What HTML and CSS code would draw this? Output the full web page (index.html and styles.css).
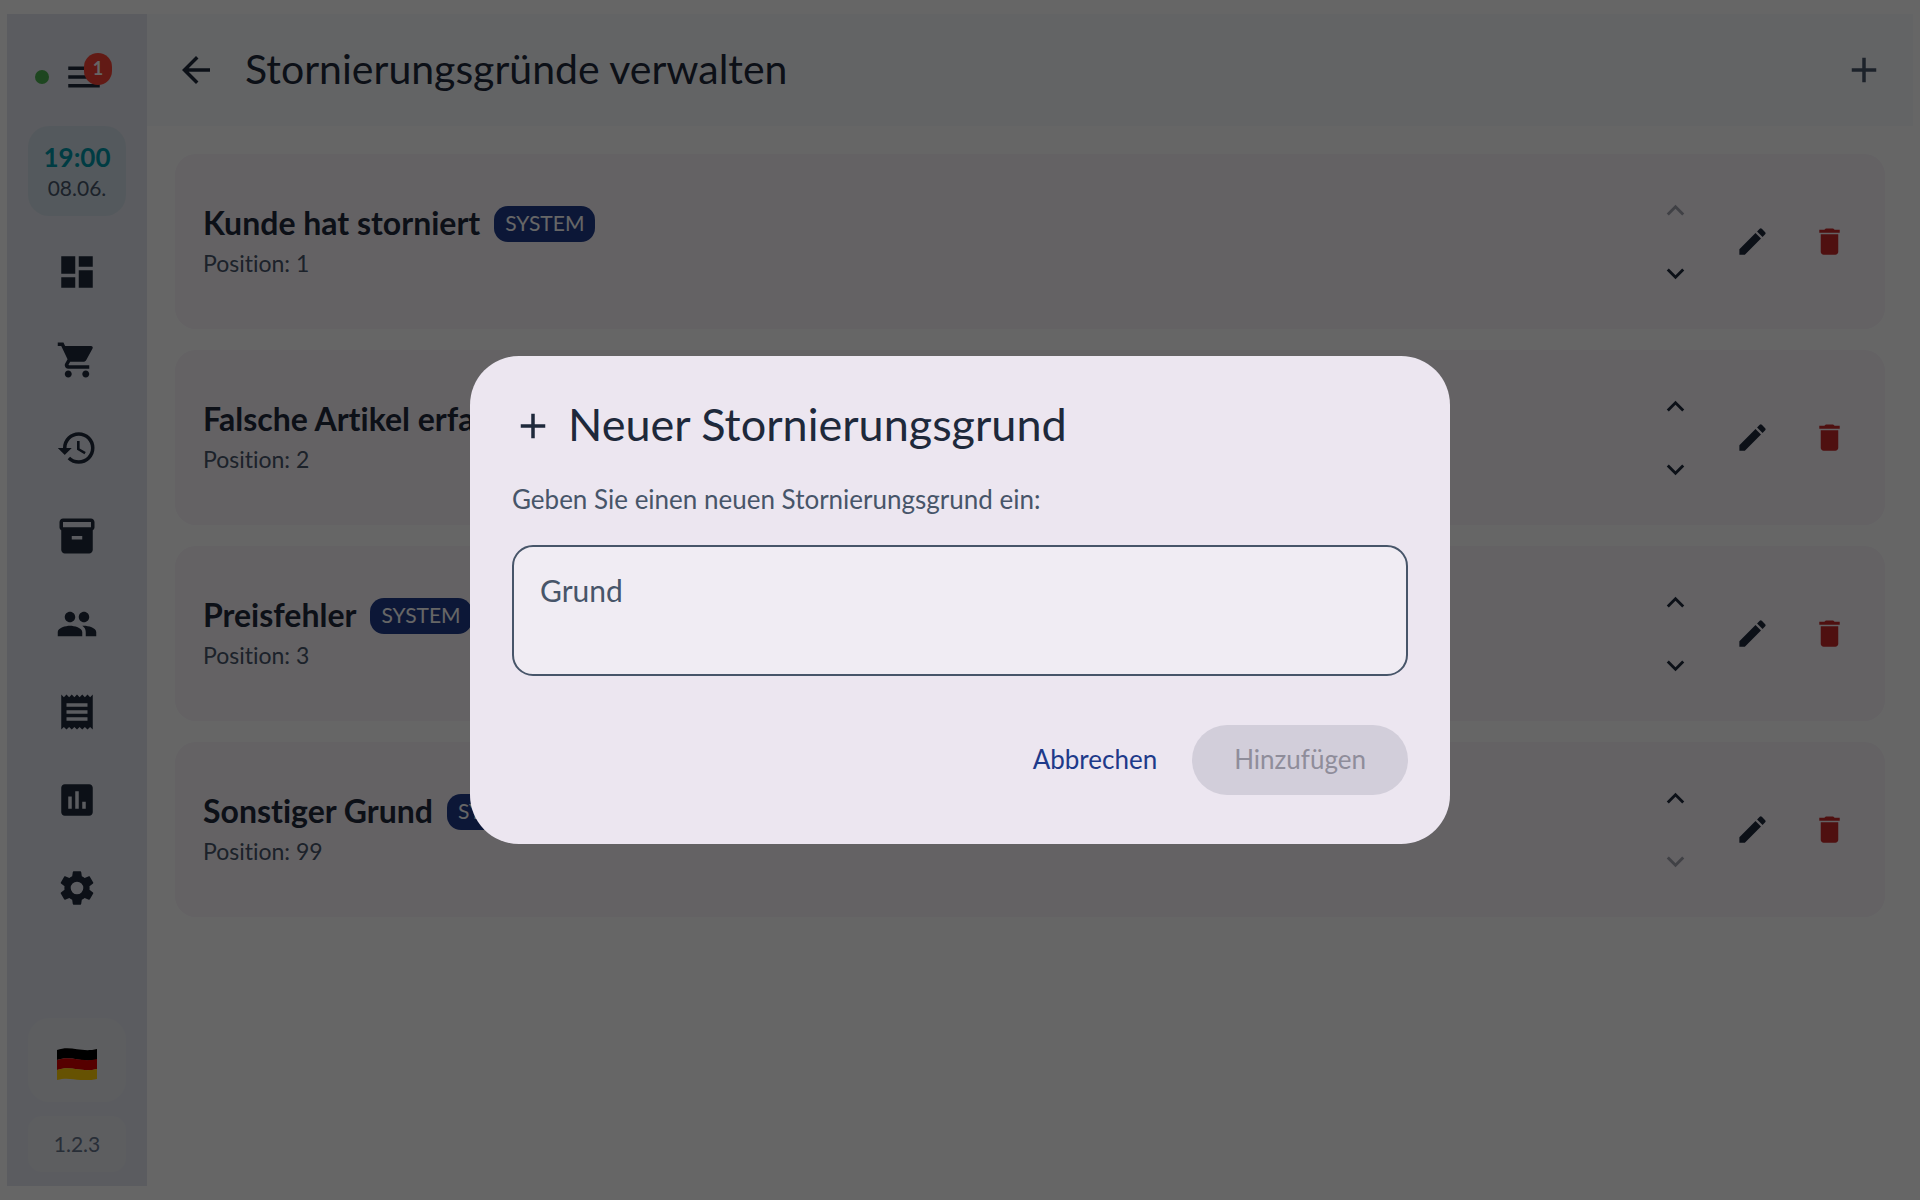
FILE: index.html
```html
<!DOCTYPE html>
<html lang="de">
<head>
    <meta charset="UTF-8">
    <meta name="viewport" content="width=device-width, initial-scale=1.0">
    <title>Stornierungsgründe verwalten</title>
    <link rel="stylesheet" href="styles.css">
</head>
<body>
    <!-- Shared icons -->
    <svg class="sprite" aria-hidden="true">
        <symbol id="up" viewBox="0 0 24 24"><path d="M7.41 15.41L12 10.83l4.59 4.58L18 14l-6-6-6 6z"/></symbol>
        <symbol id="down" viewBox="0 0 24 24"><path d="M7.41 8.59L12 13.17l4.59-4.58L18 10l-6 6-6-6z"/></symbol>
        <symbol id="edit" viewBox="0 0 24 24"><path d="M3 17.25V21h3.75L17.81 9.94l-3.75-3.75L3 17.25zM20.71 7.04a1 1 0 0 0 0-1.41l-2.34-2.34a1 1 0 0 0-1.41 0l-1.83 1.83 3.75 3.75 1.83-1.83z"/></symbol>
        <symbol id="delete" viewBox="0 0 24 24"><path d="M6 19c0 1.1.9 2 2 2h8c1.1 0 2-.9 2-2V7H6v12zM19 4h-3.5l-1-1h-5l-1 1H5v2h14V4z"/></symbol>
        <symbol id="add" viewBox="0 0 24 24"><path d="M19 13h-6v6h-2v-6H5v-2h6V5h2v6h6v2z"/></symbol>
    </svg>

    <div class="app">
        <aside class="sidebar">
            <div class="menu-row">
                <span class="online-dot"></span>
                <button class="menu-btn" aria-label="Menü">
                    <svg class="icon" viewBox="0 0 24 24"><path d="M3 18h18v-2H3v2zm0-5h18v-2H3v2zm0-7v2h18V6H3z"/></svg>
                    <span class="count">1</span>
                </button>
            </div>
            <div class="clock">
                <span class="time">19:00</span>
                <span class="date">08.06.</span>
            </div>
            <nav>
                <a href="#" aria-label="Übersicht"><svg class="icon" viewBox="0 0 24 24"><path d="M3 13h8V3H3v10zm0 8h8v-6H3v6zm10 0h8V11h-8v10zm0-18v6h8V3h-8z"/></svg></a>
                <a href="#" aria-label="Verkauf"><svg class="icon" viewBox="0 0 24 24"><path d="M7 18c-1.1 0-1.99.9-1.99 2S5.9 22 7 22s2-.9 2-2-.9-2-2-2zM1 2v2h2l3.6 7.59-1.35 2.45c-.16.28-.25.61-.25.96 0 1.1.9 2 2 2h12v-2H7.42c-.14 0-.25-.11-.25-.25l.03-.12.9-1.63h7.45c.75 0 1.41-.41 1.75-1.03l3.58-6.49A1 1 0 0 0 20 4H5.21l-.94-2H1zm16 16c-1.1 0-1.99.9-1.99 2s.89 2 1.99 2 2-.9 2-2-.9-2-2-2z"/></svg></a>
                <a href="#" aria-label="Verlauf"><svg class="icon" viewBox="0 0 24 24"><path d="M13 3a9 9 0 0 0-9 9H1l3.89 3.89.07.14L9 12H6c0-3.87 3.13-7 7-7s7 3.13 7 7-3.13 7-7 7c-1.93 0-3.68-.79-4.94-2.06l-1.42 1.42A8.95 8.95 0 0 0 13 21a9 9 0 0 0 0-18zm-1 5v5l4.28 2.54.72-1.21-3.5-2.08V8H12z"/></svg></a>
                <a href="#" aria-label="Artikel"><svg class="icon" viewBox="0 0 24 24"><path fill-rule="evenodd" d="M20 2H4c-1 0-2 .9-2 2v3.01c0 .72.43 1.34 1 1.69V20c0 1.1 1.1 2 2 2h14c.9 0 2-.9 2-2V8.7c.57-.35 1-.97 1-1.69V4c0-1.1-1-2-2-2zm-5 12H9v-2h6v2zm5-7H4V4h16v3z"/></svg></a>
                <a href="#" aria-label="Kunden"><svg class="icon" viewBox="0 0 24 24"><path d="M16 11c1.66 0 2.99-1.34 2.99-3S17.66 5 16 5s-3 1.34-3 3 1.34 3 3 3zm-8 0c1.66 0 2.99-1.34 2.99-3S9.66 5 8 5 5 6.34 5 8s1.34 3 3 3zm0 2c-2.33 0-7 1.17-7 3.5V19h14v-2.5c0-2.33-4.67-3.5-7-3.5zm8 0c-.29 0-.62.02-.97.05 1.16.84 1.97 1.97 1.97 3.45V19h6v-2.5c0-2.33-4.67-3.5-7-3.5z"/></svg></a>
                <a href="#" aria-label="Belege"><svg class="icon" viewBox="0 0 24 24"><path d="M18 17H6v-2h12v2zm0-4H6v-2h12v2zm0-4H6V7h12v2zM3 22l1.5-1.5L6 22l1.5-1.5L9 22l1.5-1.5L12 22l1.5-1.5L15 22l1.5-1.5L18 22l1.5-1.5L21 22V2l-1.5 1.5L18 2l-1.5 1.5L15 2l-1.5 1.5L12 2l-1.5 1.5L9 2 7.5 3.5 6 2 4.5 3.5 3 2v20z"/></svg></a>
                <a href="#" aria-label="Berichte"><svg class="icon" viewBox="0 0 24 24"><path d="M19 3H5c-1.1 0-2 .9-2 2v14c0 1.1.9 2 2 2h14c1.1 0 2-.9 2-2V5c0-1.1-.9-2-2-2zM9 17H7v-7h2v7zm4 0h-2V7h2v10zm4 0h-2v-4h2v4z"/></svg></a>
                <a href="#" aria-label="Einstellungen"><svg class="icon" viewBox="0 0 24 24"><path d="M19.14 12.94c.04-.3.06-.61.06-.94 0-.32-.02-.64-.07-.94l2.03-1.58c.18-.14.23-.41.12-.61l-1.92-3.32c-.12-.22-.37-.29-.59-.22l-2.39.96c-.5-.38-1.03-.7-1.62-.94l-.36-2.54c-.04-.24-.24-.41-.48-.41h-3.84c-.24 0-.43.17-.47.41l-.36 2.54c-.59.24-1.13.57-1.62.94l-2.39-.96c-.22-.08-.47 0-.59.22L2.74 8.87c-.12.21-.08.47.12.61l2.03 1.58c-.05.3-.09.63-.09.94s.02.64.07.94l-2.03 1.58c-.18.14-.23.41-.12.61l1.92 3.32c.12.22.37.29.59.22l2.39-.96c.5.38 1.03.7 1.62.94l.36 2.54c.05.24.24.41.48.41h3.84c.24 0 .44-.17.47-.41l.36-2.54c.59-.24 1.13-.56 1.62-.94l2.39.96c.22.08.47 0 .59-.22l1.92-3.32c.12-.22.07-.47-.12-.61l-2.01-1.58zM12 15.6a3.6 3.6 0 1 1 0-7.2 3.6 3.6 0 0 1 0 7.2z"/></svg></a>
            </nav>
            <button class="language" aria-label="Deutsch">
                <svg class="flag" viewBox="0 0 40 32">
                    <path fill="#000" d="M0 2C14-3 24 5 40 1v11C24 15 14 7 0 12z"/>
                    <path fill="#d80000" d="M0 12C14 7 24 15 40 11v10C24 25 14 17 0 22z"/>
                    <path fill="#ffcd05" d="M0 22c14-5 24 3 40-1v10c-16 4-26-3-40 1z"/>
                </svg>
            </button>
            <div class="version">1.2.3</div>
        </aside>

        <div class="page">
            <header>
                <button class="icon-btn" aria-label="Zurück"><svg class="icon" viewBox="0 0 24 24"><path d="M20 11H7.83l5.59-5.59L12 4l-8 8 8 8 1.41-1.41L7.83 13H20v-2z"/></svg></button>
                <h1>Stornierungsgründe verwalten</h1>
                <button class="icon-btn add-btn" aria-label="Hinzufügen"><svg class="icon"><use href="#add"/></svg></button>
            </header>
            <main>
                <article class="reason">
                    <div class="info">
                        <div class="name"><h2>Kunde hat storniert</h2><span class="tag">SYSTEM</span></div>
                        <p>Position: 1</p>
                    </div>
                    <div class="order">
                        <button class="small-btn" aria-label="Nach oben" disabled><svg><use href="#up"/></svg></button>
                        <button class="small-btn" aria-label="Nach unten"><svg><use href="#down"/></svg></button>
                    </div>
                    <button class="small-btn edit" aria-label="Bearbeiten"><svg><use href="#edit"/></svg></button>
                    <button class="small-btn delete" aria-label="Löschen"><svg><use href="#delete"/></svg></button>
                </article>
                <article class="reason">
                    <div class="info">
                        <div class="name"><h2>Falsche Artikel erfasst</h2></div>
                        <p>Position: 2</p>
                    </div>
                    <div class="order">
                        <button class="small-btn" aria-label="Nach oben"><svg><use href="#up"/></svg></button>
                        <button class="small-btn" aria-label="Nach unten"><svg><use href="#down"/></svg></button>
                    </div>
                    <button class="small-btn edit" aria-label="Bearbeiten"><svg><use href="#edit"/></svg></button>
                    <button class="small-btn delete" aria-label="Löschen"><svg><use href="#delete"/></svg></button>
                </article>
                <article class="reason">
                    <div class="info">
                        <div class="name"><h2>Preisfehler</h2><span class="tag">SYSTEM</span></div>
                        <p>Position: 3</p>
                    </div>
                    <div class="order">
                        <button class="small-btn" aria-label="Nach oben"><svg><use href="#up"/></svg></button>
                        <button class="small-btn" aria-label="Nach unten"><svg><use href="#down"/></svg></button>
                    </div>
                    <button class="small-btn edit" aria-label="Bearbeiten"><svg><use href="#edit"/></svg></button>
                    <button class="small-btn delete" aria-label="Löschen"><svg><use href="#delete"/></svg></button>
                </article>
                <article class="reason">
                    <div class="info">
                        <div class="name"><h2>Sonstiger Grund</h2><span class="tag">SYSTEM</span></div>
                        <p>Position: 99</p>
                    </div>
                    <div class="order">
                        <button class="small-btn" aria-label="Nach oben"><svg><use href="#up"/></svg></button>
                        <button class="small-btn" aria-label="Nach unten" disabled><svg><use href="#down"/></svg></button>
                    </div>
                    <button class="small-btn edit" aria-label="Bearbeiten"><svg><use href="#edit"/></svg></button>
                    <button class="small-btn delete" aria-label="Löschen"><svg><use href="#delete"/></svg></button>
                </article>
            </main>
        </div>
    </div>

    <div class="overlay">
        <form class="dialog" role="dialog" aria-labelledby="dialog-title">
            <div class="dialog-head">
                <svg class="icon"><use href="#add"/></svg>
                <h2 id="dialog-title">Neuer Stornierungsgrund</h2>
            </div>
            <label for="reason">Geben Sie einen neuen Stornierungsgrund ein:</label>
            <textarea id="reason" rows="2" placeholder="Grund"></textarea>
            <div class="actions">
                <button type="button" class="cancel">Abbrechen</button>
                <button type="submit" class="submit" disabled>Hinzufügen</button>
            </div>
        </form>
    </div>
</body>
</html>
```
FILE: styles.css
```css
* {
    box-sizing: border-box;
}
body {
    margin: 0;
    font-family: Lato, "Open Sans", sans-serif;
    font-variant-ligatures: none;
    background-color: #ffffff;
    color: #1e293b;
}
h1, h2, p {
    margin: 0;
}
button {
    font-family: inherit;
    color: inherit;
    background: none;
    border: none;
    padding: 0;
    cursor: pointer;
}
svg {
    display: block;
    fill: currentColor;
}
.sprite {
    display: none;
}
.icon {
    width: 42px;
    height: 42px;
    flex: none;
}
.app {
    display: flex;
    height: 100vh;
    padding: 14px 7px;
}

/* Sidebar */
.sidebar {
    display: flex;
    flex-direction: column;
    width: 140px;
    flex: none;
    padding: 28px 21px 14px;
    background-color: #e4e6ef;
}
.menu-row {
    display: flex;
    align-items: center;
    height: 70px;
    padding-left: 7px;
    gap: 14px;
}
.online-dot {
    width: 14px;
    height: 14px;
    border-radius: 50%;
    background-color: #4caf50;
}
.menu-btn {
    position: relative;
}
.count {
    position: absolute;
    top: -3px;
    right: -7px;
    width: 28px;
    height: 32px;
    border-radius: 14px;
    background-color: #f44336;
    color: #ffffff;
    font-size: 18px;
    font-weight: bold;
    line-height: 30px;
}
.clock {
    display: flex;
    flex-direction: column;
    align-items: center;
    margin-top: 14px;
    padding: 14px 0;
    border-radius: 21px;
    background-color: #d3dfe9;
}
.time {
    font-size: 26px;
    font-weight: bold;
    line-height: 34px;
    color: #0097a7;
}
.date {
    font-size: 21px;
    line-height: 28px;
    color: #475569;
}
nav {
    display: flex;
    flex-direction: column;
    align-items: center;
    flex: 1;
    margin-top: 12px;
}
nav a {
    display: flex;
    align-items: center;
    height: 88px;
    color: inherit;
}
.language {
    display: flex;
    align-items: center;
    justify-content: center;
    height: 84px;
    padding-top: 8px;
    border-radius: 21px;
    background-color: #e8ebf1;
}
.flag {
    width: 40px;
    height: 32px;
}
.version {
    margin-top: 14px;
    border-radius: 14px;
    background-color: #e8ebf1;
    font-size: 21px;
    line-height: 56px;
    text-align: center;
    color: #64748b;
}

/* Page */
.page {
    flex: 1;
    min-width: 0;
}
header {
    display: flex;
    align-items: center;
    height: 112px;
    padding: 0 14px;
    background-color: #f8fafc;
}
.icon-btn {
    display: flex;
    align-items: center;
    justify-content: center;
    width: 70px;
    height: 70px;
}
header h1 {
    flex: 1;
    margin-left: 14px;
    padding-bottom: 4px;
    font-size: 41px;
    font-weight: normal;
}
.add-btn {
    color: #475569;
}
main {
    display: flex;
    flex-direction: column;
    gap: 21px;
    padding: 28px;
}
.reason {
    display: flex;
    align-items: center;
    gap: 21px;
    padding: 28px;
    border-radius: 21px;
    background-color: #f9f4fb;
}
.info {
    flex: 1;
}
.name {
    display: flex;
    align-items: center;
    gap: 14px;
    height: 36px;
}
.name h2 {
    padding-bottom: 4px;
    font-size: 32px;
}
.tag {
    height: 36px;
    padding: 0 11px;
    border-radius: 14px;
    background-color: #1e3a8a;
    color: #ffffff;
    font-size: 21px;
    line-height: 34px;
}
.info p {
    margin-top: 7px;
    font-size: 23px;
    line-height: 28px;
    color: #475569;
}
.order {
    display: flex;
    flex-direction: column;
    gap: 7px;
}
.small-btn {
    display: flex;
    align-items: center;
    justify-content: center;
    width: 56px;
    height: 56px;
}
.small-btn svg {
    width: 35px;
    height: 35px;
}
.small-btn:disabled {
    opacity: 0.4;
}
.delete {
    color: #c62828;
}

/* Dialog */
.overlay {
    position: fixed;
    inset: 0;
    display: flex;
    align-items: center;
    justify-content: center;
    background-color: rgba(0, 0, 0, 0.6);
}
.dialog {
    width: 980px;
    max-width: 100%;
    padding: 42px 42px 49px;
    border-radius: 49px;
    background-color: #ece6f0;
}
.dialog-head {
    display: flex;
    align-items: center;
    gap: 14px;
    height: 56px;
}
.dialog-head h2 {
    padding-bottom: 4px;
    font-size: 45px;
    font-weight: normal;
}
.dialog label {
    display: block;
    margin-top: 28px;
    font-size: 26px;
    line-height: 35px;
    color: #475569;
}
.dialog textarea {
    display: block;
    width: 100%;
    height: 131px;
    margin-top: 28px;
    padding: 26px;
    border: 2px solid #475569;
    border-radius: 21px;
    background-color: #f0ecf3;
    color: #1e293b;
    font-family: inherit;
    font-size: 30px;
    line-height: 35px;
    resize: none;
}
.dialog textarea::placeholder {
    color: #475569;
    opacity: 1;
}
.actions {
    display: flex;
    justify-content: flex-end;
    gap: 14px;
    margin-top: 49px;
}
.actions button {
    height: 70px;
    padding-bottom: 2px;
    border-radius: 35px;
    font-size: 26px;
}
.actions .cancel {
    padding-left: 21px;
    padding-right: 21px;
    color: #1e3a8a;
}
.actions .submit {
    padding-left: 42px;
    padding-right: 42px;
    background-color: #d2ceda;
    color: #8f8d9a;
}
```
